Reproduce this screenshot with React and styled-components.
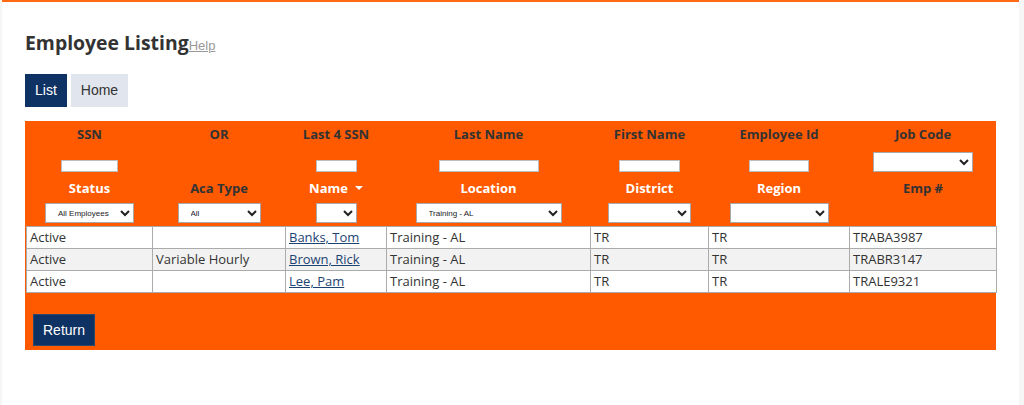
import React from 'react';
import styled, { createGlobalStyle } from 'styled-components';

const GlobalStyle = createGlobalStyle`
  html, body {
    margin: 0;
    padding: 0;
    background: #f6f6f6;
  }
  body {
    font-family: "Open Sans", "Liberation Sans", sans-serif;
    color: #333;
  }
`;

const Page = styled.div`
  width: 1017px;
  min-height: 405px;
  margin-left: 2px;
  background: #fff;
  border-top: 2px solid #ff6a13;
  box-sizing: border-box;
  padding: 27px 0 0 23px;
`;

const TitleRow = styled.div`
  display: flex;
  align-items: baseline;
`;

const Title = styled.h1`
  margin: 0;
  font-size: 19.4px;
  line-height: 28px;
  font-weight: 700;
  color: #333;
`;

const HelpLink = styled.a`
  font-family: "Liberation Sans", Arial, sans-serif;
  font-size: 13px;
  color: #999;
  text-decoration: underline;
`;

const Tabs = styled.div`
  display: flex;
  gap: 4px;
  margin-top: 17px;
`;

const TabButton = styled.button`
  font-family: "Liberation Sans", Arial, sans-serif;
  font-size: 14px;
  line-height: 17px;
  height: 33px;
  padding: 0 10px;
  border: none;
  background: ${p => (p.$active ? '#0e3263' : '#e1e6ee')};
  color: ${p => (p.$active ? '#fff' : '#333')};
  cursor: pointer;
`;

const Panel = styled.div`
  margin-top: 14px;
  width: 971px;
  background: #ff5a00;
  padding-left: 1px;
  box-sizing: border-box;
`;

const Grid = styled.table`
  width: 970px;
  border-collapse: collapse;
  table-layout: fixed;
`;

const HeadCell = styled.th`
  padding: 0;
  font-weight: 700;
  vertical-align: top;
`;

const HeadStack = styled.div`
  height: ${p => p.$h}px;
  box-sizing: border-box;
  padding: ${p => p.$pad}px 0;
  display: flex;
  flex-direction: column;
  align-items: center;
  justify-content: space-between;
`;

const HeadLabel = styled.span`
  font-size: 13px;
  line-height: 18px;
  color: ${p => (p.$light ? '#fff' : '#333')};
  white-space: nowrap;
  display: inline-flex;
  align-items: center;
  gap: 7px;
`;

const Caret = styled.span`
  width: 0;
  height: 0;
  border-left: 4px solid transparent;
  border-right: 4px solid transparent;
  border-top: 4px solid #fff;
`;

const TextBox = styled.input`
  width: ${p => p.$w}px;
  height: 12px;
  box-sizing: border-box;
  border: 1px solid #bdbdbd;
  background: #fff;
  padding: 0;
  margin: 0;
`;

const Picker = styled.select`
  width: ${p => p.$w}px;
  height: 20px;
  box-sizing: border-box;
  font-family: "Liberation Sans", Arial, sans-serif;
  font-size: 8px;
  border: 1px solid #a8a8a8;
  border-radius: 0;
  background: #fff;
  color: #222;
  padding: 0 0 0 8px;
  margin: 0;
`;

const Row = styled.tr`
  background: ${p => (p.$alt ? '#f2f2f2' : '#fff')};
`;

const Cell = styled.td`
  border: 1px solid #ababab;
  height: 21px;
  padding: 0 3px;
  font-size: 13px;
  line-height: 21px;
  color: #333;
  white-space: nowrap;
  overflow: hidden;
`;

const NameLink = styled.a`
  color: #1d4373;
  text-decoration: underline;
`;

const Footer = styled.div`
  padding: 21px 7px 4px;
`;

const ReturnButton = styled.button`
  font-family: "Liberation Sans", Arial, sans-serif;
  font-size: 14px;
  height: 32px;
  padding: 0 9px;
  background: #0e3263;
  color: #fff;
  border: 1px solid #2b4a6e;
  cursor: pointer;
`;

const widths = [126, 133, 101, 204, 118, 141, 147];

const rows = [
  { status: 'Active', aca: '', name: 'Banks, Tom', loc: 'Training - AL', district: 'TR', region: 'TR', emp: 'TRABA3987' },
  { status: 'Active', aca: 'Variable Hourly', name: 'Brown, Rick', loc: 'Training - AL', district: 'TR', region: 'TR', emp: 'TRABR3147' },
  { status: 'Active', aca: '', name: 'Lee, Pam', loc: 'Training - AL', district: 'TR', region: 'TR', emp: 'TRALE9321' },
];

const App = () => {
  return (
    <>
      <GlobalStyle />
      <Page>
        <TitleRow>
          <Title>Employee Listing</Title>
          <HelpLink href="#">Help</HelpLink>
        </TitleRow>
        <Tabs>
          <TabButton $active>List</TabButton>
          <TabButton>Home</TabButton>
        </Tabs>
        <Panel>
          <Grid>
            <colgroup>
              {widths.map((w, i) => <col key={i} style={{ width: w }} />)}
            </colgroup>
            <thead>
              <tr>
                <HeadCell>
                  <HeadStack $h={55} $pad={4}>
                    <HeadLabel>SSN</HeadLabel>
                    <TextBox $w={57} />
                  </HeadStack>
                </HeadCell>
                <HeadCell>
                  <HeadStack $h={55} $pad={4}>
                    <HeadLabel>OR</HeadLabel>
                  </HeadStack>
                </HeadCell>
                <HeadCell>
                  <HeadStack $h={55} $pad={4}>
                    <HeadLabel>Last 4 SSN</HeadLabel>
                    <TextBox $w={41} />
                  </HeadStack>
                </HeadCell>
                <HeadCell>
                  <HeadStack $h={55} $pad={4}>
                    <HeadLabel>Last Name</HeadLabel>
                    <TextBox $w={100} />
                  </HeadStack>
                </HeadCell>
                <HeadCell>
                  <HeadStack $h={55} $pad={4}>
                    <HeadLabel>First Name</HeadLabel>
                    <TextBox $w={61} />
                  </HeadStack>
                </HeadCell>
                <HeadCell>
                  <HeadStack $h={55} $pad={4}>
                    <HeadLabel>Employee Id</HeadLabel>
                    <TextBox $w={60} />
                  </HeadStack>
                </HeadCell>
                <HeadCell>
                  <HeadStack $h={55} $pad={4}>
                    <HeadLabel>Job Code</HeadLabel>
                    <Picker $w={100}><option></option></Picker>
                  </HeadStack>
                </HeadCell>
              </tr>
              <tr>
                <HeadCell>
                  <HeadStack $h={50} $pad={3}>
                    <HeadLabel $light>Status</HeadLabel>
                    <Picker $w={89}><option>All Employees</option></Picker>
                  </HeadStack>
                </HeadCell>
                <HeadCell>
                  <HeadStack $h={50} $pad={3}>
                    <HeadLabel>Aca Type</HeadLabel>
                    <Picker $w={83}><option>All</option></Picker>
                  </HeadStack>
                </HeadCell>
                <HeadCell>
                  <HeadStack $h={50} $pad={3}>
                    <HeadLabel $light>Name <Caret /></HeadLabel>
                    <Picker $w={41}><option></option></Picker>
                  </HeadStack>
                </HeadCell>
                <HeadCell>
                  <HeadStack $h={50} $pad={3}>
                    <HeadLabel $light>Location</HeadLabel>
                    <Picker $w={146}><option>Training - AL</option></Picker>
                  </HeadStack>
                </HeadCell>
                <HeadCell>
                  <HeadStack $h={50} $pad={3}>
                    <HeadLabel $light>District</HeadLabel>
                    <Picker $w={83}><option></option></Picker>
                  </HeadStack>
                </HeadCell>
                <HeadCell>
                  <HeadStack $h={50} $pad={3}>
                    <HeadLabel $light>Region</HeadLabel>
                    <Picker $w={99}><option></option></Picker>
                  </HeadStack>
                </HeadCell>
                <HeadCell>
                  <HeadStack $h={50} $pad={3}>
                    <HeadLabel>Emp #</HeadLabel>
                    <span />
                  </HeadStack>
                </HeadCell>
              </tr>
            </thead>
            <tbody>
              {rows.map((r, i) => (
                <Row key={r.emp} $alt={i % 2 === 1}>
                  <Cell>{r.status}</Cell>
                  <Cell>{r.aca}</Cell>
                  <Cell><NameLink href="#">{r.name}</NameLink></Cell>
                  <Cell>{r.loc}</Cell>
                  <Cell>{r.district}</Cell>
                  <Cell>{r.region}</Cell>
                  <Cell>{r.emp}</Cell>
                </Row>
              ))}
            </tbody>
          </Grid>
          <Footer>
            <ReturnButton>Return</ReturnButton>
          </Footer>
        </Panel>
      </Page>
    </>
  );
};

export default App;
